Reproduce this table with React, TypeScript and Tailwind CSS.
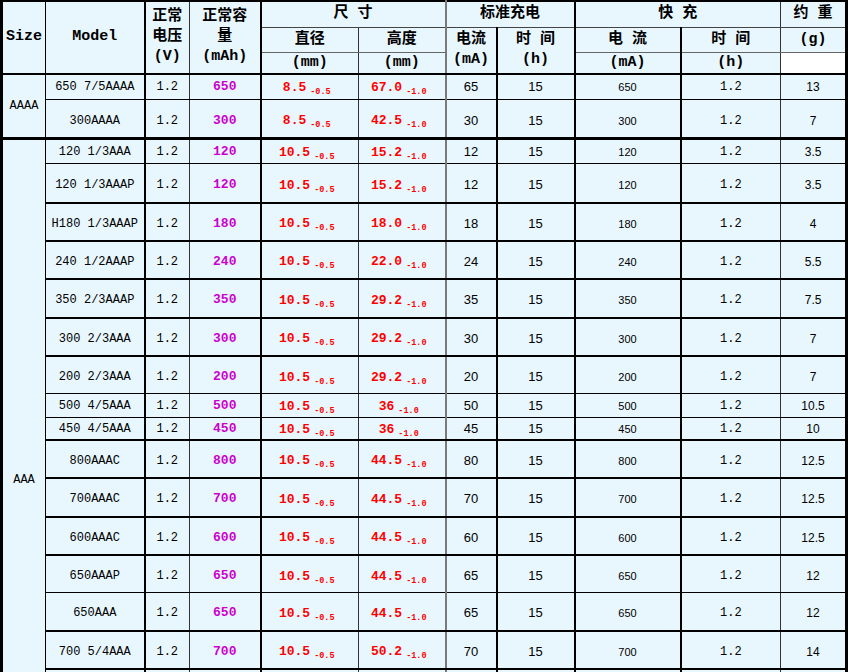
type Row = {
  model: string;
  cap: string;
  dia: string;
  hgt: string;
  cur: string;
  fcur: string;
  wt: string;
  h: string;
  b: string;
};

const aaaa: Row[] = [
  { model: '650 7/5AAAA', cap: '650', dia: '8.5', hgt: '67.0', cur: '65', fcur: '650', wt: '13', h: 'h-[26px]', b: 'border-b' },
  { model: '300AAAA', cap: '300', dia: '8.5', hgt: '42.5', cur: '30', fcur: '300', wt: '7', h: 'h-[39px]', b: 'border-b-[3px]' },
];

const aaa: Row[] = [
  { model: '120 1/3AAA', cap: '120', dia: '10.5', hgt: '15.2', cur: '12', fcur: '120', wt: '3.5', h: 'h-[25px]', b: 'border-b' },
  { model: '120 1/3AAAP', cap: '120', dia: '10.5', hgt: '15.2', cur: '12', fcur: '120', wt: '3.5', h: 'h-[39px]', b: 'border-b-2' },
  { model: 'H180 1/3AAAP', cap: '180', dia: '10.5', hgt: '18.0', cur: '18', fcur: '180', wt: '4', h: 'h-[38px]', b: 'border-b-2' },
  { model: '240 1/2AAAP', cap: '240', dia: '10.5', hgt: '22.0', cur: '24', fcur: '240', wt: '5.5', h: 'h-[38px]', b: 'border-b-2' },
  { model: '350 2/3AAAP', cap: '350', dia: '10.5', hgt: '29.2', cur: '35', fcur: '350', wt: '7.5', h: 'h-[39px]', b: 'border-b-2' },
  { model: '300 2/3AAA', cap: '300', dia: '10.5', hgt: '29.2', cur: '30', fcur: '300', wt: '7', h: 'h-[38px]', b: 'border-b-2' },
  { model: '200 2/3AAA', cap: '200', dia: '10.5', hgt: '29.2', cur: '20', fcur: '200', wt: '7', h: 'h-[38px]', b: 'border-b' },
  { model: '500 4/5AAA', cap: '500', dia: '10.5', hgt: '36', cur: '50', fcur: '500', wt: '10.5', h: 'h-[24px]', b: 'border-b' },
  { model: '450 4/5AAA', cap: '450', dia: '10.5', hgt: '36', cur: '45', fcur: '450', wt: '10', h: 'h-[22px]', b: 'border-b-2' },
  { model: '800AAAC', cap: '800', dia: '10.5', hgt: '44.5', cur: '80', fcur: '800', wt: '12.5', h: 'h-[38px]', b: 'border-b-2' },
  { model: '700AAAC', cap: '700', dia: '10.5', hgt: '44.5', cur: '70', fcur: '700', wt: '12.5', h: 'h-[39px]', b: 'border-b-2' },
  { model: '600AAAC', cap: '600', dia: '10.5', hgt: '44.5', cur: '60', fcur: '600', wt: '12.5', h: 'h-[38px]', b: 'border-b-2' },
  { model: '650AAAP', cap: '650', dia: '10.5', hgt: '44.5', cur: '65', fcur: '650', wt: '12', h: 'h-[38px]', b: 'border-b' },
  { model: '650AAA', cap: '650', dia: '10.5', hgt: '44.5', cur: '65', fcur: '650', wt: '12', h: 'h-[38px]', b: 'border-b-2' },
  { model: '700 5/4AAA', cap: '700', dia: '10.5', hgt: '50.2', cur: '70', fcur: '700', wt: '14', h: 'h-[38px]', b: 'border-b-2' },
  { model: '750 5/4AAA', cap: '750', dia: '10.5', hgt: '50.2', cur: '75', fcur: '750', wt: '14', h: 'h-[38px]', b: 'border-b-2' },
  { model: '800 5/4AAA', cap: '800', dia: '10.5', hgt: '50.2', cur: '80', fcur: '800', wt: '14', h: 'h-[38px]', b: 'border-b-2' },
  { model: '900AAA', cap: '900', dia: '10.5', hgt: '50.2', cur: '90', fcur: '900', wt: '15', h: 'h-[38px]', b: 'border-b-2' },
  { model: '1000AAA', cap: '1000', dia: '10.5', hgt: '50.2', cur: '100', fcur: '1000', wt: '15', h: 'h-[38px]', b: 'border-b-[3px]' },
];

// right borders per column, left to right
const rb = [
  'border-r border-r-black',
  'border-r-2 border-r-black',
  'border-r border-r-[#333]',
  'border-r-2 border-r-black',
  'border-r border-r-[#333]',
  'border-r-2 border-r-[#7a7a7a]',
  'border-r-2 border-r-black',
  'border-r-2 border-r-black',
  'border-r-2 border-r-black',
  'border-r border-r-[#333]',
  'border-r-[3px] border-r-black',
];

const cell = 'p-0 text-center align-middle bg-[#e8f7fe] border-b-black whitespace-nowrap leading-[14px]';
const mono = "font-['Liberation_Mono','Noto_Sans_CJK_SC',monospace]";
const sans = "font-['Liberation_Sans','Noto_Sans_CJK_SC',sans-serif]";
const head = 'p-0 text-center align-middle bg-[#e8f7fe] font-bold text-[15px] text-black leading-[20px]';

function Dim({ v, tol }: { v: string; tol: string }) {
  return (
    <span className="inline-block pr-[6px] text-[#ff0000] font-bold leading-[13px] align-[-2px]">
      <span className="text-[13px]">{v}</span>
      <span className="ml-[4px] text-[8.5px] leading-none align-[-3px]">{tol}</span>
    </span>
  );
}

function DataRow({ r, size, span }: { r: Row; size?: string; span?: number }) {
  const tall = r.h === 'h-[38px]' || r.h === 'h-[39px]';
  const c = `${cell} ${tall ? 'pt-[4px]' : 'pt-[1px]'} ${r.b}`;
  return (
    <tr className={r.h}>
      {size && (
        <td rowSpan={span} className={`${cell} ${rb[0]} border-b-[3px] text-[12px] ${mono}`}>
          {size}
        </td>
      )}
      <td className={`${c} ${rb[1]} text-[12px] ${mono}`}>{r.model}</td>
      <td className={`${c} ${rb[2]} text-[12px] ${mono}`}>1.2</td>
      <td className={`${c} ${rb[3]} text-[13px] font-bold text-[#cc00cc] ${mono}`}>{r.cap}</td>
      <td className={`${c} ${rb[4]} ${mono}`}>
        <Dim v={r.dia} tol="-0.5" />
      </td>
      <td className={`${c} ${rb[5]} ${mono}`}>
        <Dim v={r.hgt} tol="-1.0" />
      </td>
      <td className={`${c} ${rb[6]} text-[13px] ${sans}`}>{r.cur}</td>
      <td className={`${c} ${rb[7]} text-[13px] ${sans}`}>15</td>
      <td className={`${c} ${rb[8]} text-[11px] ${sans}`}>{r.fcur}</td>
      <td className={`${c} ${rb[9]} text-[12px] ${mono}`}>1.2</td>
      <td className={`${c} ${rb[10]} text-[12px] ${sans}`}>{r.wt}</td>
    </tr>
  );
}

export default function App() {
  return (
    <div className="bg-white">
      <table className={`w-[848px] table-fixed border-collapse border-l-[3px] border-t-2 border-black text-black ${mono}`}>
        <colgroup>
          <col className="w-[44px]" />
          <col className="w-[99px]" />
          <col className="w-[45px]" />
          <col className="w-[71px]" />
          <col className="w-[98px]" />
          <col className="w-[87px]" />
          <col className="w-[51px]" />
          <col className="w-[78px]" />
          <col className="w-[106px]" />
          <col className="w-[100px]" />
          <col className="w-[66px]" />
        </colgroup>
        <thead>
          <tr className="h-[26px]">
            <th rowSpan={3} className={`${head} ${rb[0]} border-b-2 border-b-black text-[14px]`}>Size</th>
            <th rowSpan={3} className={`${head} ${rb[1]} border-b-2 border-b-black text-[14px]`}>Model</th>
            <th rowSpan={3} className={`${head} ${rb[2]} border-b-2 border-b-black`}>
              正常<br />电压<br />(V)
            </th>
            <th rowSpan={3} className={`${head} ${rb[3]} border-b-2 border-b-black`}>
              正常容<br />量<br />(mAh)
            </th>
            <th colSpan={2} className={`${head} ${rb[5]} border-b border-b-[#444]`}>尺 寸</th>
            <th colSpan={2} className={`${head} ${rb[7]} border-b border-b-[#444]`}>标准充电</th>
            <th colSpan={2} className={`${head} ${rb[9]} border-b border-b-[#444]`}>快 充</th>
            <th className={`${head} ${rb[10]} border-b border-b-[#444]`}>约 重</th>
          </tr>
          <tr className="h-[25px]">
            <th className={`${head} ${rb[4]} border-b border-b-[#666]`}>直径</th>
            <th className={`${head} ${rb[5]} border-b border-b-[#666]`}>高度</th>
            <th rowSpan={2} className={`${head} ${rb[6]} border-b-2 border-b-black`}>
              电流<br />(mA)
            </th>
            <th rowSpan={2} className={`${head} ${rb[7]} border-b-2 border-b-black`}>
              时 间<br />(h)
            </th>
            <th className={`${head} ${rb[8]} border-b border-b-[#666]`}>电 流</th>
            <th className={`${head} ${rb[9]} border-b border-b-[#666]`}>时 间</th>
            <th className={`${head} ${rb[10]} border-b border-b-[#666]`}>(g)</th>
          </tr>
          <tr className="h-[20px]">
            <th className={`${head} ${rb[4]} border-b-2 border-b-black text-[14px]`}>(mm)</th>
            <th className={`${head} ${rb[5]} border-b-2 border-b-black text-[14px]`}>(mm)</th>
            <th className={`${head} ${rb[8]} border-b-2 border-b-black text-[14px]`}>(mA)</th>
            <th className={`${head} ${rb[9]} border-b-2 border-b-black text-[14px]`}>(h)</th>
            <th className={`${head} ${rb[10]} border-b-2 border-b-black !bg-white`}></th>
          </tr>
        </thead>
        <tbody>
          {aaaa.map((r, i) => (
            <DataRow key={r.model} r={r} size={i === 0 ? 'AAAA' : undefined} span={aaaa.length} />
          ))}
          {aaa.map((r, i) => (
            <DataRow key={r.model} r={r} size={i === 0 ? 'AAA' : undefined} span={aaa.length} />
          ))}
        </tbody>
      </table>
    </div>
  );
}
